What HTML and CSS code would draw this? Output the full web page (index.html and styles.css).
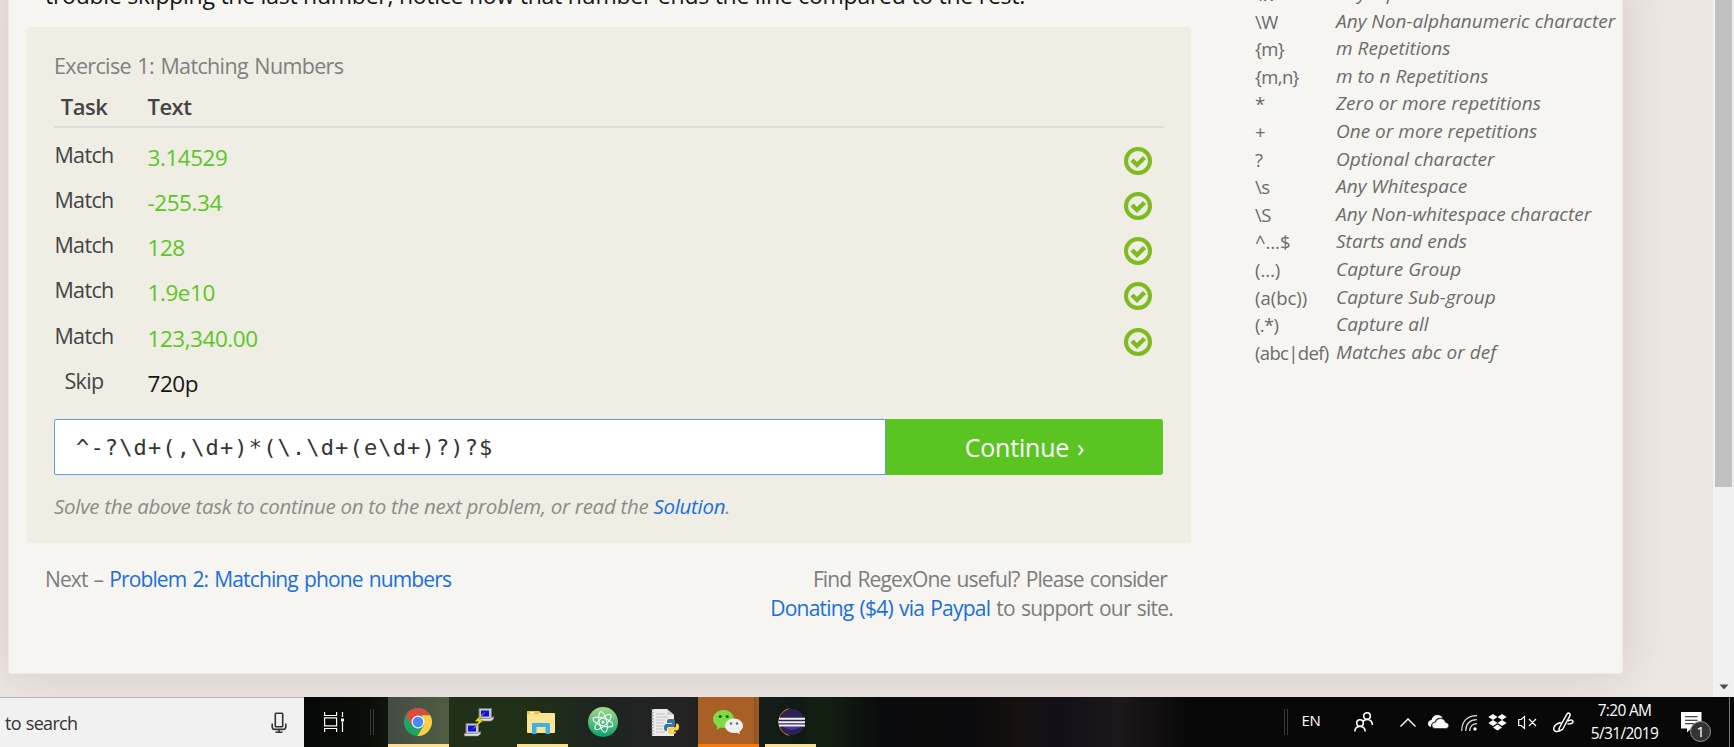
FILE: index.html
```html
<!DOCTYPE html>
<html lang="en">
<head>
<meta charset="utf-8">
<title>RegexOne</title>
<link rel="stylesheet" href="styles.css">
</head>
<body>
<div class="viewport">
  <main class="card">
    <div class="lesson">
      <p class="intro">trouble skipping the last number, notice how that number ends the line compared to the rest.</p>
      <section class="exercise">
        <h2 class="title">Exercise 1: Matching Numbers</h2>
        <div class="row head"><span class="task">Task</span><span class="text">Text</span></div>
        <div class="rows">
          <div class="row"><span class="task">Match</span><span class="text ok">3.14529</span><svg class="tick" viewBox="0 0 28 28"><use href="#tick"/></svg></div>
          <div class="row"><span class="task">Match</span><span class="text ok">-255.34</span><svg class="tick" viewBox="0 0 28 28"><use href="#tick"/></svg></div>
          <div class="row"><span class="task">Match</span><span class="text ok">128</span><svg class="tick" viewBox="0 0 28 28"><use href="#tick"/></svg></div>
          <div class="row"><span class="task">Match</span><span class="text ok">1.9e10</span><svg class="tick" viewBox="0 0 28 28"><use href="#tick"/></svg></div>
          <div class="row"><span class="task">Match</span><span class="text ok">123,340.00</span><svg class="tick" viewBox="0 0 28 28"><use href="#tick"/></svg></div>
          <div class="row"><span class="task">Skip</span><span class="text">720p</span></div>
        </div>
        <div class="form"><div class="field">^-?\d+(,\d+)*(\.\d+(e\d+)?)?$</div><div class="continue">Continue ›</div></div>
        <p class="hint">Solve the above task to continue on to the next problem, or read the <a>Solution</a>.</p>
      </section>
      <div class="footer">
        <p class="next">Next – <a>Problem 2: Matching phone numbers</a></p>
        <div class="donate"><p class="find">Find RegexOne useful? Please consider</p><p class="pay"><a>Donating ($4) via Paypal</a> to support our site.</p></div>
      </div>
    </div>
    <dl class="notes">
      <dt>\w</dt><dd>Any Alphanumeric character</dd>
      <dt>\W</dt><dd>Any Non-alphanumeric character</dd>
      <dt>{m}</dt><dd>m Repetitions</dd>
      <dt>{m,n}</dt><dd>m to n Repetitions</dd>
      <dt>*</dt><dd>Zero or more repetitions</dd>
      <dt>+</dt><dd>One or more repetitions</dd>
      <dt>?</dt><dd>Optional character</dd>
      <dt>\s</dt><dd>Any Whitespace</dd>
      <dt>\S</dt><dd>Any Non-whitespace character</dd>
      <dt class="wide">^…$</dt><dd>Starts and ends</dd>
      <dt class="wide">(…)</dt><dd>Capture Group</dd>
      <dt class="wide">(a(bc))</dt><dd>Capture Sub-group</dd>
      <dt>(.*)</dt><dd>Capture all</dd>
      <dt>(abc|def)</dt><dd>Matches abc or def</dd>
    </dl>
  </main>
  <div class="scrollbar"><div class="thumb"></div><svg class="arrow" width="10" height="6"><path d="M0.5 0.5h9L5 5.5z" fill="#505050"/></svg></div>
</div>

<div class="taskbar">
  <div class="search"><span>to search</span>
    <svg width="16" height="22" viewBox="0 0 16 22" fill="none" stroke="#333" stroke-width="1.6"><rect x="4.3" y="1.3" width="7.4" height="13.4" rx=".8"/><path d="M1.2 11.5v3.2q0 2.7 2.8 2.7h8q2.8 0 2.8-2.7v-3.2M8 17.5v2.6M4.5 20.2h7"/></svg>
  </div>
  <div class="tile view"><svg width="20" height="20" viewBox="0 0 20 20" fill="none" stroke="#fff" stroke-width="1.2"><path d="M.6 0v3.5h12V0M.6 20v-3.500h12V20M18.500 0v5M18.500 10v10"/><rect x=".6" y="5.900" width="12" height="8"/><rect x="17" y="6.500" width="3" height="3" fill="#fff" stroke="none"/></svg></div>
  <div class="sep"></div>
  <div class="tile active line"><svg width="28" height="28" viewBox="0 0 28 28"><circle cx="14" cy="14" r="14" fill="#1fa463"/><path d="M1.900 7A14 14 0 0 1 26.200 7.300H14L8 17.500z" fill="#dd4b3e"/><path d="M26.200 7.300A14 14 0 0 1 13.500 28l6.300-10.500L18 7.300z" fill="#ffce44"/><circle cx="14" cy="14" r="6.500" fill="#f4f4f4"/><circle cx="14" cy="14" r="5.200" fill="#4a8af4"/></svg></div>
  <div class="tile"><svg width="30" height="30" viewBox="0 0 30 30"><g id="pc"><path d="M15 1.500h12.500v10H15z" fill="#c9c9cc" stroke="#777"/><path d="M17 3.500h8v6h-8z" fill="#1010e8"/><path d="M13.500 11.500h13l3-2v2.500l-2.500 2h-13.500z" fill="#e2e2e2" stroke="#888" stroke-width=".6"/></g><use href="#pc" x="-13" y="15"/><path d="M21 5L11 14l4 .5L9 22l10-8.500-4-.8z" fill="#ffee00" stroke="#777700" stroke-width=".5"/></svg></div>
  <div class="tile line short"><svg width="28" height="24" viewBox="0 0 28 24"><path d="M0 2q0-1 1-1h11l2 2h13q1 0 1 1v18q0 1-1 1H1q-1 0-1-1z" fill="#ffe394"/><path d="M0 4V2q0-1 1-1h11l1 1.500L11 4.500z" fill="#f7c52d"/><path d="M3 2h4v1.500H3z" fill="#fff"/><path d="M5 24V14q0-1 1-1h16q1 0 1 1v10h-4.500v-7H9.500v7z" fill="#3bb3e6"/></svg></div>
  <div class="tile"><svg width="30" height="30" viewBox="0 0 30 30"><defs><linearGradient id="g" x2="0" y2="1"><stop stop-color="#a5d78b"/><stop offset="1" stop-color="#08a270"/></linearGradient></defs><circle cx="15" cy="15" r="15" fill="url(#g)"/><g fill="none" stroke="#effaf2" stroke-width="1.100"><ellipse cx="15" cy="15" rx="10.500" ry="3.800" transform="rotate(18 15 15)"/><ellipse cx="15" cy="15" rx="10.500" ry="3.800" transform="rotate(78 15 15)"/><ellipse cx="15" cy="15" rx="10.500" ry="3.800" transform="rotate(138 15 15)"/></g><circle cx="15" cy="15" r="1.500" fill="#fff"/></svg></div>
  <div class="tile"><svg width="28" height="29" viewBox="0 0 28 29"><path d="M1 1h15l7 6v21H1z" fill="#ececec"/><path d="M16 1v6h7" fill="#cfcfcf"/><path d="M5 6h9M5 9h12M5 12h9M5 15h8M5 18h8M5 21h7M5 24h9" stroke="#c2c2c2" stroke-width="1"/><path d="M1.500 1v27" stroke="#999" stroke-dasharray="1.500 1.500" stroke-width="2"/><path d="M18 11h3.500q2.500 0 2.500 2.500V17q0 2-2 2h-4q-2 0-2 2v2h-1q-2 0-2-3.500T15.500 16H21v-1h-5v-2q0-2 2-2z" fill="#3876aa"/><path d="M21.500 26H20q-3 0-3-2.500V21q0-1.500 2-1.500h4q2 0 2-2v-2h1q2 0 2 3.500t-2.500 3.500H20v1h5v.5q0 2-3.500 2z" fill="#ffd43b"/></svg></div>
  <div class="tile wechat line"><svg width="30" height="24" viewBox="0 0 30 24"><path d="M10.500 0C4.700 0 0 4 0 9c0 3 1.600 5.500 4.200 7.200L3.500 19.800l4.200-2.200c.9.300 1.800.4 2.800.4C16.300 18 21 14 21 9S16.300 0 10.500 0z" fill="#7fdb46"/><circle cx="7.200" cy="6.500" r="1.600" fill="#1b6020"/><circle cx="14.200" cy="6.500" r="1.600" fill="#1b6020"/><path d="M21 8.500c5 0 9 3.300 9 7.300 0 2.500-1.400 4.500-3.600 5.800l.6 2.400-3.300-1.300c-.9.200-1.800.3-2.700.3-5 0-9-3.200-9-7.200s4-7.300 9-7.300z" fill="#eef0f2"/><circle cx="18" cy="13.500" r="1.200" fill="#666"/><circle cx="24" cy="13.500" r="1.200" fill="#666"/></svg></div>
  <div class="tile line short last"><svg width="30" height="28" viewBox="0 0 30 28"><path d="M15 .2A14 14 0 0 0 15 27.800 15 15 0 0 1 15 .2z" fill="#f7941e"/><circle cx="16.800" cy="14" r="13" fill="#2c2255"/><path d="M8 18.500q9 7 18 0z" fill="#4a35a0"/><path d="M4 10.800h26M3.500 14.200h27M4 17.600h26" stroke="#f4f2fa" stroke-width="2"/></svg></div>
  <div class="tray">
    <div class="sep2"></div>
    <div class="lang">EN</div>
    <svg class="people" width="20" height="20" viewBox="0 0 20 20" fill="none" stroke="#fff" stroke-width="1.600"><circle cx="13" cy="4" r="3.300"/><path d="M9 9.500q1.500-2 4-2 5 0 5.500 5.500"/><circle cx="6" cy="11" r="3.300"/><path d="M.8 19.500q.2-5 5.200-5t5.200 5"/></svg>
    <svg class="chev" width="16" height="9" viewBox="0 0 16 9" fill="none" stroke="#fff" stroke-width="1.400"><path d="M.5 8.500L8 1l7.500 7.500"/></svg>
    <svg class="cloud" width="21" height="14" viewBox="0 0 21 14"><path d="M3 12q-3-.5-3-3.500T3.500 5Q5 0 9.500 0q3.500 0 5 3-6-1-7.500 3.500-4 .5-4 5.500z" fill="#fff"/><path d="M7 13.500q-3-.3-3-3.200T7.500 7.200Q9 3.500 12.500 3.500q4 0 5 4 3.200.2 3.200 3t-3 3z" fill="#fff" stroke="#080808" stroke-width=".5"/></svg>
    <svg class="wifi" width="16" height="16" viewBox="0 0 16 16" fill="none" stroke="#ddd" stroke-width="1.200"><path d="M.7 16Q1 1 16 .7M4.700 16Q5 5 16 4.700M8.700 16Q9 9 16 8.700"/><circle cx="14" cy="14" r="1.700" fill="#fff" stroke="none"/></svg>
    <svg class="drop" width="19" height="17" viewBox="0 0 19 17" fill="#fff"><path d="M5 0l4.500 3L5 6 .3 3zM14 0l4.700 3L14 6 9.500 3zM5 6l4.500 3L5 12 .3 9zM14 6l4.700 3L14 12 9.500 9zM9.500 10.500L14 13.500l-4.500 3-4.500-3z"/></svg>
    <svg class="mute" width="19" height="15" viewBox="0 0 19 15" fill="none" stroke="#fff" stroke-width="1.200"><path d="M.7 4.500h2.500L6.500 1.500v12L3.200 10.500H.7zM11 4l7 7M18 4l-7 7"/></svg>
    <svg class="pen" width="21" height="21" viewBox="0 0 21 21" fill="none" stroke="#fff" stroke-width="1.500"><path d="M6 16.500L14 2q1.500-2 3 0 .5 1-.3 2.200L9.500 17.500 6.500 19zM8 10.500q-7.500 2-7.300 6.500.3 3.500 5.800 2M15 9q5-2 5 .5 0 2.500-5.500 2.500"/></svg>
    <div class="clock"><span class="time">7:20 AM</span><span class="date">5/31/2019</span></div>
    <div class="notif"><svg width="21" height="21" viewBox="0 0 21 21"><path d="M0 0h20.500v16.500H10L6 20.500v-4H0z" fill="#fff"/><path d="M4 4.700h12.500M4 8.200h12.500M4 11.700h12.500" stroke="#111" stroke-width="1.100"/></svg><span class="badge">1</span></div>
    <div class="edge"></div>
  </div>
</div>
<svg class="sprites" width="0" height="0"><symbol id="tick" viewBox="0 0 28 28"><circle cx="14" cy="14" r="12" fill="none" stroke="#7dbb20" stroke-width="4"/><path d="M8 13l5 5 7.500-7.500" fill="none" stroke="#7dbb20" stroke-width="4.400"/></symbol></svg>
</body>
</html>
```
FILE: styles.css
```css
* { box-sizing: border-box; margin: 0; padding: 0; }
body { width: 1734px; height: 747px; overflow: hidden; font-family: "Open Sans", sans-serif; background: #ede7e4; color: #3c3c3c; display: flex; flex-direction: column; }
a { color: #1a6fe0; }
p, span, dt, dd, h2 { white-space: nowrap; }
svg { display: block; flex: none; }
.sprites { position: absolute; }

.viewport { height: 697px; flex: none; display: flex; overflow: hidden; }
.card { width: 1615px; height: 696px; margin: -22px 0 0 8px; background: #f6f5f1; border: 1px solid #f0ebe8; border-radius: 3px; box-shadow: 0 2px 50px rgba(60, 30, 20, .14); display: flex; align-items: flex-start; flex: none; }
.lesson { width: 1182px; padding-left: 18px; }
.intro { height: 48px; padding-left: 18px; font-size: 23px; line-height: 32px; letter-spacing: -.25px; color: #151515; }
.exercise { height: 516px; width: 1164px; padding: 24px 27px 0; background: #efede4; border-radius: 4px; }
.title { font-weight: 400; font-size: 21.5px; line-height: 30px; letter-spacing: -.65px; word-spacing: 1.5px; color: #808080; }
.row { display: flex; align-items: center; height: 45.15px; }
.task { width: 60px; margin-right: 33.5px; text-align: center; font-size: 21.5px; letter-spacing: -.65px; padding-bottom: 8px; color: #444; }
.text { font-size: 22.5px; letter-spacing: -.45px; padding-bottom: 2px; color: #151515; }
.ok { color: #5ac71f; }
.head { height: 47px; width: 1110px; padding-top: 4px; border-bottom: 2px solid #dcdcdf; }
.head .task, .head .text { font-weight: 600; font-size: 22px; letter-spacing: -.5px; padding-bottom: 0; color: #444; }
.rows { width: 1110px; padding-top: 8px; }
.tick { width: 28px; height: 28px; margin: 5px 12px 0 auto; }
.form { display: flex; width: 1109px; height: 56px; margin-top: 12px; }
.field { width: 832px; border: 1px solid #5f9bf5; border-top-width: 1.5px; border-bottom-width: 1.5px; border-radius: 2px 0 0 2px; background: #fff; padding-left: 21px; font: 22px/56px "DejaVu Sans Mono", monospace; letter-spacing: 1.15px; color: #333; white-space: pre; }
.continue { flex: 1; border-radius: 0 3px 3px 0; background: #5ac522; color: #fff; font-size: 25px; line-height: 57px; text-align: center; letter-spacing: -.2px; word-spacing: 1.5px; }
.hint { margin-top: 16px; font-size: 20.5px; line-height: 30px; letter-spacing: -.29px; font-style: italic; color: #8c8b87; }
.footer { display: flex; justify-content: space-between; padding: 21.5px 18px 0; width: 1164px; font-size: 21px; line-height: 29px; color: #7c7c7c; word-spacing: 1.5px; }
.next { letter-spacing: -.9px; }
.next a { letter-spacing: -.87px; }
.donate { text-align: right; }
.find { letter-spacing: -.86px; padding-right: 6px; }
.pay { letter-spacing: -.79px; }
.notes { display: grid; grid-template-columns: 81px 1fr; grid-auto-rows: 27.6px; margin: 1px 0 0 64px; font-size: 18.5px; line-height: 27.6px; color: #6b6b6b; }
.notes dt { letter-spacing: -.65px; }
.notes .wide { letter-spacing: 0; }
.notes dd { font-style: italic; font-size: 19px; letter-spacing: .02px; }
.scrollbar { margin-left: auto; width: 21px; background: #f1f1f1; display: flex; flex-direction: column; align-items: center; justify-content: space-between; padding-bottom: 7px; }
.thumb { width: 17px; height: 487px; background: #c1c1c1; }

.taskbar { height: 50px; flex: none; display: flex; color: #fff; background: linear-gradient(90deg, #060807 304px, #0a0e08 370px, #22301a 450px, #203017 530px, #1e2420 600px, #232323 680px, #101a14 800px, #132010 825px, #0a0b0c 880px, #0b0a0c 970px, #17110f 1020px, #130f19 1060px, #1c171a 1120px, #080808 1190px); }
.search { width: 304px; background: #f1f1f1; border-top: 1px solid #b8b6b5; display: flex; align-items: center; justify-content: space-between; padding: 0 17px 0 5px; color: #333; font-size: 18px; letter-spacing: -.7px; word-spacing: 1px; }
.tile { width: 62px; display: flex; align-items: center; justify-content: center; position: relative; padding-right: 2px; }
.view { width: 60px; padding-bottom: 1px; padding-right: 0; }
.sep { width: 4px; height: 26px; margin: 12px 14px 0 6px; border: solid #3a3a3a; border-width: 0 1px; }
.active { width: 61px; background: linear-gradient(90deg, #454b45, #505d43); }
.line::after { content: ""; position: absolute; left: 0; right: 0; bottom: 0; height: 3px; background: #ffe08a; }
.short::after { left: 6px; right: 5px; }
.last::after { left: 5px; right: 6px; }
.last { margin-left: 1px; }
.wechat { width: 61px; margin-left: 1px; background: linear-gradient(90deg, #a86026 56px, #7f4a20 56px, #9a5824 57px); }
.wechat::after { background: #ff7800; }
.tray { margin-left: auto; width: 450px; display: flex; align-items: center; }
.sep2 { width: 4px; height: 26px; border: solid #3a3a3a; border-width: 0 1px; }
.lang { width: 46px; text-align: center; font-size: 15px; letter-spacing: -.3px; padding-bottom: 5px; }
.people { margin-left: 20px; }
.chev { margin-left: 26px; }
.cloud { margin-left: 12px; }
.wifi { margin: 2px 0 0 12px; }
.drop { margin-left: 11px; }
.mute { margin-left: 11px; }
.pen { margin-left: 16px; }
.clock { width: 89px; margin-left: 6px; display: flex; flex-direction: column; align-items: center; font-size: 15.5px; line-height: 23px; letter-spacing: -.68px; }
.notif { width: 59px; margin-left: 1px; padding-left: 11px; position: relative; }
.badge { position: absolute; left: 20px; top: 9px; width: 21px; height: 21px; border-radius: 50%; background: #333; border: 1px solid #999; font-size: 15px; line-height: 19px; text-align: center; }
.edge { width: 1px; height: 50px; background: #777; }
```
